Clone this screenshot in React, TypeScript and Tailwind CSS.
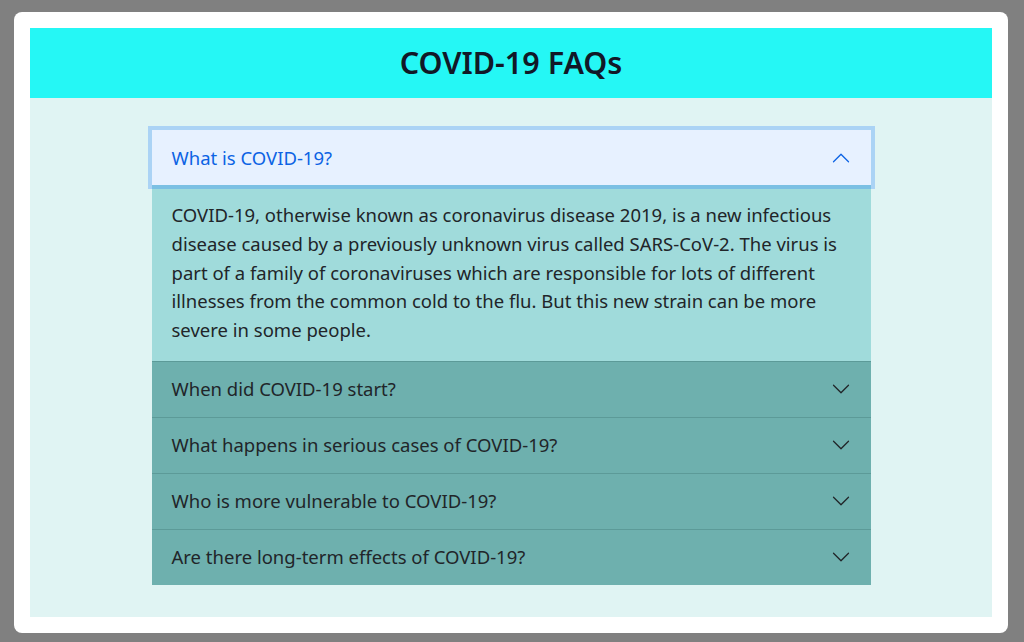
import { useState } from "react";

const faqs = [
  {
    q: "What is COVID-19?",
    a: "COVID-19, otherwise known as coronavirus disease 2019, is a new infectious disease caused by a previously unknown virus called SARS-CoV-2. The virus is part of a family of coronaviruses which are responsible for lots of different illnesses from the common cold to the flu. But this new strain can be more severe in some people.",
  },
  { q: "When did COVID-19 start?", a: "" },
  { q: "What happens in serious cases of COVID-19?", a: "" },
  { q: "Who is more vulnerable to COVID-19?", a: "" },
  { q: "Are there long-term effects of COVID-19?", a: "" },
];

const Chevron = ({ open }: { open: boolean }) => (
  <svg
    viewBox="0 0 16 16"
    className={`h-5 w-5 shrink-0 ${open ? "rotate-180 text-[#0c63e4]" : "text-[#212529]"}`}
    fill="currentColor"
  >
    <path
      fillRule="evenodd"
      d="M1.646 4.646a.5.5 0 0 1 .708 0L8 10.293l5.646-5.647a.5.5 0 0 1 .708.708l-6 6a.5.5 0 0 1-.708 0l-6-6a.5.5 0 0 1 0-.708z"
    />
  </svg>
);

export default function App() {
  const [open, setOpen] = useState(0);

  return (
    <div
      className="min-h-screen bg-[#808080] pt-[12px] pl-[14px] pr-[16px] pb-[9px]"
      style={{ fontFamily: '"Noto Sans", "Open Sans", sans-serif' }}
    >
      <div className="rounded-lg bg-white p-4">
        {/* Header */}
        <div className="flex h-[70px] items-center justify-center bg-[#25f7f5]">
          <h1 className="text-[30.5px] font-semibold text-[#111827]">COVID-19 FAQs</h1>
        </div>

        {/* FAQ list */}
        <div className="bg-[#e0f4f3] py-8">
          <div className="mx-auto w-[719px]">
            {faqs.map((f, i) => {
              const isOpen = open === i;
              return (
                <div key={f.q} className={i > 0 && !isOpen ? "border-t border-[#5c9a98]" : ""}>
                  <button
                    onClick={() => setOpen(isOpen ? -1 : i)}
                    className={`flex h-[55px] w-full items-center justify-between px-5 text-left text-[18.5px] ${
                      isOpen
                        ? "relative z-10 bg-[#e7f1ff] text-[#0c63e4] ring-4 ring-[#0d6efd]/25"
                        : "bg-[#6eb0ae] text-[#212529]"
                    }`}
                  >
                    <span>{f.q}</span>
                    <Chevron open={isOpen} />
                  </button>
                  {isOpen && f.a && (
                    <div className="bg-[#a0dbdb] px-5 py-4 text-[18.5px] leading-[28.75px] text-[#212529]">
                      {f.a}
                    </div>
                  )}
                </div>
              );
            })}
          </div>
        </div>
      </div>
    </div>
  );
}
